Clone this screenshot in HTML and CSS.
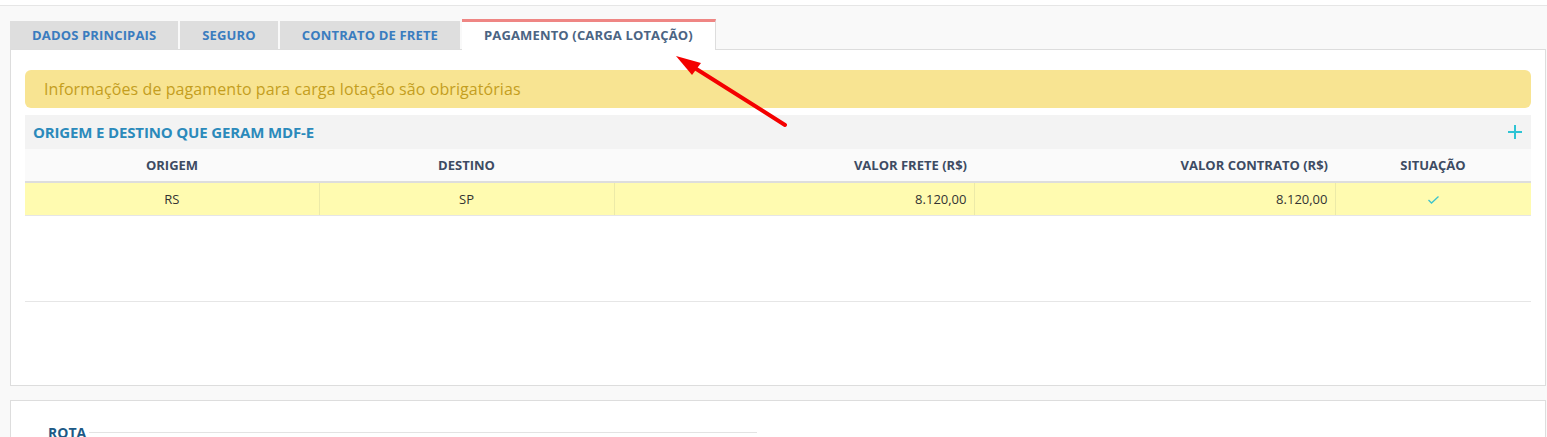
FILE: index.html
```html
<!DOCTYPE html>
<html lang="pt-BR">
<head>
  <meta charset="UTF-8" />
  <title>Pagamento (Carga Lotação)</title>
  <link rel="stylesheet" href="styles.css">
</head>
<body>
  <div class="topbar"></div>

  <main class="page">
    <ul class="tabs">
      <li class="tab">Dados Principais</li>
      <li class="tab">Seguro</li>
      <li class="tab">Contrato de Frete</li>
      <li class="tab active">Pagamento (Carga Lotação)</li>
    </ul>

    <div class="panel">
      <div class="alert">Informações de pagamento para carga lotação são obrigatórias</div>

      <div class="section-head">
        <span>Origem e destino que geram MDF-e</span>
        <svg class="add" width="14" height="14" viewBox="0 0 14 14">
          <path d="M7 0v14M0 7h14" stroke="#2ec4d4" stroke-width="2" />
        </svg>
      </div>

      <table class="grid">
        <colgroup>
          <col class="c-origem"><col class="c-destino"><col class="c-frete"><col class="c-contrato"><col class="c-sit">
        </colgroup>
        <thead>
          <tr>
            <th>Origem</th>
            <th>Destino</th>
            <th class="num">Valor Frete (R$)</th>
            <th class="num">Valor Contrato (R$)</th>
            <th>Situação</th>
          </tr>
        </thead>
        <tbody>
          <tr class="selected">
            <td>RS</td>
            <td>SP</td>
            <td class="num">8.120,00</td>
            <td class="num">8.120,00</td>
            <td>
              <svg width="11" height="8" viewBox="0 0 11 8">
                <path d="M0.5 4l3 3l7 -6.5" fill="none" stroke="#3cc3cc" stroke-width="1.3" />
              </svg>
            </td>
          </tr>
        </tbody>
      </table>
      <div class="grid-footer"></div>
    </div>

    <div class="panel panel-route">
      <div class="legend">
        <span>Rota</span>
        <div class="legend-line"></div>
      </div>
    </div>
  </main>

  <!-- annotation arrow -->
  <svg class="arrow" width="1547" height="437" viewBox="0 0 1547 437">
    <line x1="785" y1="125" x2="690" y2="65" stroke="#f40000" stroke-width="4" stroke-linecap="round" />
    <polygon points="676,56 701,63 692,75" fill="#f40000" />
  </svg>
</body>
</html>
```

FILE: styles.css
```css
/* Global Styles */
* {
  box-sizing: border-box;
}
body {
  margin: 0;
  font-family: 'Open Sans', 'Noto Sans', sans-serif;
  background-color: #f9f9f9;
  color: #333;
  height: 437px;
  overflow: hidden;
}
.topbar {
  height: 6px;
  background-color: #fff;
  border-bottom: 1px solid #e6e6e6;
}
.page {
  padding: 13px 1px 0 10px;
}

/* Tabs */
.tabs {
  list-style: none;
  margin: 0;
  padding: 0;
  display: flex;
  align-items: flex-end;
}
.tab {
  height: 28px;
  line-height: 28px;
  padding: 0 22px;
  margin-right: 2px;
  background-color: #dedede;
  color: #3a7cbf;
  font-size: 13px;
  font-weight: 700;
  letter-spacing: 0.15px;
  text-transform: uppercase;
}
.tab.active {
  height: 31px;
  line-height: 27px;
  margin-bottom: -1px;
  background-color: #fff;
  color: #4b6483;
  border-top: 3px solid #ef8684;
  border-right: 1px solid #ddd;
  position: relative;
}

/* Panels */
.panel {
  background-color: #fff;
  border: 1px solid #ddd;
  padding: 20px 14px 83px;
}
.alert {
  height: 38px;
  line-height: 38px;
  padding: 0 19px;
  background-color: #f8e492;
  border-radius: 6px;
  color: #c49e1e;
  font-size: 16px;
  letter-spacing: 0.08px;
}
.section-head {
  margin-top: 7px;
  height: 34px;
  padding: 0 9px 0 8px;
  background-color: #f3f3f3;
  display: flex;
  align-items: center;
  justify-content: space-between;
  color: #2b8abb;
  font-size: 15px;
  font-weight: 700;
  letter-spacing: -0.15px;
  text-transform: uppercase;
}

/* Table */
.grid {
  width: 100%;
  border-collapse: collapse;
  table-layout: fixed;
}
.c-origem { width: 294px; }
.c-destino { width: 295px; }
.c-frete { width: 360px; }
.c-contrato { width: 361px; }
.c-sit { width: 196px; }
.grid th {
  height: 33px;
  background-color: #fafafa;
  border-bottom: 2px solid #ddd;
  color: #3d4b63;
  font-size: 13px;
  font-weight: 700;
  text-transform: uppercase;
  text-align: center;
  padding: 0 7px;
}
.grid td {
  height: 33px;
  text-align: center;
  font-size: 13px;
  padding: 0 7px;
  border-bottom: 1px solid #e6e6e6;
  border-left: 1px solid #eceaa8;
}
.grid td:first-child {
  border-left: none;
}
.grid .num {
  text-align: right;
}
.grid tr.selected td {
  background-color: #fffbb0;
}
.grid-footer {
  height: 86px;
  border-bottom: 1px solid #e6e6e6;
}

.panel-route {
  margin-top: 14px;
  padding: 22px 37px 40px;
}
.legend {
  width: 709px;
  display: flex;
  align-items: center;
  gap: 3px;
  color: #1d5a86;
  font-size: 14px;
  font-weight: 700;
  text-transform: uppercase;
}
.legend-line {
  flex: 1;
  height: 1px;
  background-color: #e3e3e3;
}

/* Annotation overlay */
.arrow {
  position: absolute;
  left: 0;
  top: 0;
  pointer-events: none;
}
```
